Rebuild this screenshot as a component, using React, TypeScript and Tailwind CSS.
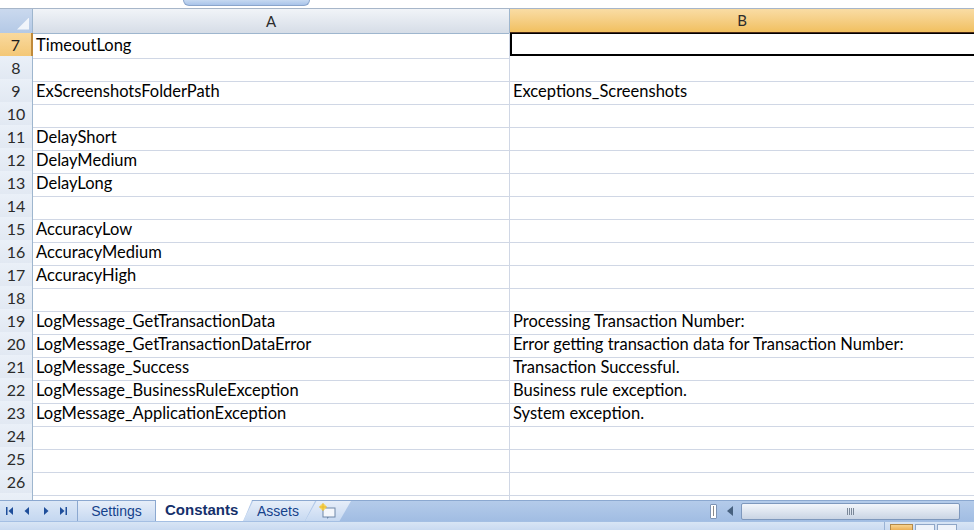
import React from 'react';

const ROWS: [number, string, string][] = [
  [7, 'TimeoutLong', ''],
  [8, '', ''],
  [9, 'ExScreenshotsFolderPath', 'Exceptions_Screenshots'],
  [10, '', ''],
  [11, 'DelayShort', ''],
  [12, 'DelayMedium', ''],
  [13, 'DelayLong', ''],
  [14, '', ''],
  [15, 'AccuracyLow', ''],
  [16, 'AccuracyMedium', ''],
  [17, 'AccuracyHigh', ''],
  [18, '', ''],
  [19, 'LogMessage_GetTransactionData', 'Processing Transaction Number:'],
  [20, 'LogMessage_GetTransactionDataError', 'Error getting transaction data for Transaction Number:'],
  [21, 'LogMessage_Success', 'Transaction Successful.'],
  [22, 'LogMessage_BusinessRuleException', 'Business rule exception.'],
  [23, 'LogMessage_ApplicationException', 'System exception.'],
  [24, '', ''],
  [25, '', ''],
  [26, '', ''],
  [27, '', ''],
];

function NavArrows() {
  return (
    <svg width="72" height="12" viewBox="0 0 72 12" className="shrink-0">
      <g fill="#1f4e9a">
        <rect x="6" y="2" width="1.5" height="8" />
        <path d="M13 2 L8.5 6 L13 10 Z" />
        <path d="M29 2 L24.5 6 L29 10 Z" />
        <path d="M44 2 L48.5 6 L44 10 Z" />
        <path d="M60 2 L64.5 6 L60 10 Z" />
        <rect x="65.5" y="2" width="1.5" height="8" />
      </g>
    </svg>
  );
}

export default function App() {
  return (
    <div className="w-[974px] h-[530px] overflow-hidden bg-white flex flex-col font-['Lato',_'Liberation_Sans',_sans-serif] text-[16.5px] text-black">
      {/* ribbon remnant */}
      <div className="h-[9px] shrink-0 bg-white border-b border-[#a7b6c9] pl-[183px]">
        <div className="w-[127px] h-[6px] rounded-b-[10px] bg-gradient-to-b from-[#c6d9f1] to-[#a9c4ea] border border-t-0 border-[#8aa5cc]" />
      </div>

      {/* column headers */}
      <div className="grid grid-cols-[33px_477px_1fr] h-[24px] shrink-0 text-[15px] text-[#2c2c2c]">
        <div className="bg-gradient-to-b from-[#cad9ee] to-[#b4c9e6] border-r border-b border-[#9eb6ce] flex items-end justify-end p-[3px]">
          <div className="w-[12px] h-[12px] bg-white/80 [clip-path:polygon(100%_0,100%_100%,0_100%)]" />
        </div>
        <div className="bg-gradient-to-b from-[#f1f4f8] to-[#d6dde7] border-r border-b border-[#9eb6ce] flex items-center justify-center">
          A
        </div>
        <div className="bg-gradient-to-b from-[#f9dca4] to-[#f1c05f] border-b-2 border-[#4a2a16] flex items-center justify-center">
          B
        </div>
      </div>

      {/* rows */}
      <div className="flex-1 overflow-hidden">
        {ROWS.map(([n, a, b]) => {
          const active = n === 7;
          return (
            <div key={n} className="grid grid-cols-[33px_477px_1fr] h-[23px]">
              <div
                className={
                  active
                    ? 'bg-gradient-to-b from-[#f9d99e] to-[#f3c672] border-r-2 border-b border-r-[#c08a3a] border-b-[#d9b36a] flex items-center justify-center pb-px text-[16px] text-[#1d1d1d]'
                    : 'bg-gradient-to-b from-[#eaf0f8] to-[#e1e8f2] border-r border-b border-[#9eb6ce] flex items-center justify-center pb-px text-[16px] text-[#2b2b2b]'
                }
              >
                {n}
              </div>
              <div className="border-r border-b border-[#d0d7e5] px-[3px] flex items-center whitespace-nowrap overflow-hidden">
                {a}
              </div>
              {active ? (
                <div className="overflow-hidden -mt-px">
                  <div className="w-[470px] h-[24px] border-2 border-black" />
                </div>
              ) : (
                <div className="border-b border-[#d0d7e5] px-[3px] flex items-center whitespace-nowrap overflow-hidden">
                  {b}
                </div>
              )}
            </div>
          );
        })}
      </div>

      {/* sheet tabs + scrollbar */}
      <div className="h-[21px] shrink-0 flex bg-gradient-to-b from-[#b4cbea] to-[#a1bde3] border-t border-[#8ba8d0] font-['Liberation_Sans',_sans-serif] text-[14px] text-[#15428b]">
        <div className="w-[78px] flex items-center bg-gradient-to-b from-[#dbe7f6] to-[#c4d7f0] border-r border-[#8ba8d0]">
          <NavArrows />
        </div>
        <div className="w-[78px] flex items-center justify-center bg-gradient-to-b from-[#e6eef9] to-[#c7d9f1] border-r border-[#8ba8d0]">
          Settings
        </div>
        <div className="relative w-[96px] -mt-px flex items-center pl-[9px] bg-white font-bold text-[15px] text-[#15306b] [clip-path:polygon(0_0,100%_0,91%_100%,0_100%)]">
          Constants
        </div>
        <div className="relative -ml-[9px] w-[72px] flex items-center pl-[14px] bg-gradient-to-b from-[#e6eef9] to-[#c7d9f1] [clip-path:polygon(0_100%,14%_0,100%_0,86%_100%)]">
          Assets
        </div>
        <div className="relative -ml-[10px] w-[46px] flex items-center pl-[14px] bg-gradient-to-b from-[#e6eef9] to-[#c7d9f1] [clip-path:polygon(0_100%,25%_0,100%_0,75%_100%)]">
          <svg width="18" height="16" viewBox="0 0 18 16">
            <rect x="4" y="5" width="12" height="9" fill="#f4f7fb" stroke="#6f87a8" />
            <path d="M8 14 L8 16 L10 14 Z" fill="#6f87a8" />
            <circle cx="4" cy="4" r="3" fill="#f6d75a" />
            <path d="M4 0 V8 M0 4 H8" stroke="#e9b92c" strokeWidth="1" />
          </svg>
        </div>
        <div className="flex-1" />
        <div className="w-[267px] flex items-center gap-[5px] pl-[3px]">
          <div className="w-[7px] h-[15px] bg-white border border-[#7d94b5] rounded-[1px] flex items-center justify-center">
            <div className="w-px h-[10px] bg-[#8a8a8a]" />
          </div>
          <svg width="12" height="14" viewBox="0 0 12 14" className="ml-[2px]">
            <path d="M9 2 L3 7 L9 12 Z" fill="#47617f" />
          </svg>
          <div className="flex-1 h-[17px] mr-[14px] rounded-[2px] bg-gradient-to-b from-[#f3f6fb] to-[#c9d4e4] border border-[#7e98bd] flex items-center justify-center">
            <div className="flex gap-px">
              <div className="w-px h-[7px] bg-[#7a8798]" />
              <div className="w-px h-[7px] bg-[#7a8798]" />
              <div className="w-px h-[7px] bg-[#7a8798]" />
              <div className="w-px h-[7px] bg-[#7a8798]" />
            </div>
          </div>
        </div>
      </div>

      {/* status bar */}
      <div className="h-[9px] shrink-0 flex bg-gradient-to-b from-[#d8e5f5] to-[#c9daf1] border-t border-[#a4bfe3]">
        <div className="flex-1" />
        <div className="w-[90px] flex gap-[2px] pt-[2px] pl-[5px] border-l border-[#9ab3d5]">
          <div className="w-[23px] h-[8px] bg-gradient-to-b from-[#f8d48f] to-[#e8a94a] border border-[#b38a4a]" />
          <div className="w-[20px] h-[8px] bg-[#eef3fa] border border-[#8ea6c7]" />
          <div className="w-[20px] h-[8px] bg-[#eef3fa] border border-[#8ea6c7]" />
        </div>
      </div>
    </div>
  );
}
